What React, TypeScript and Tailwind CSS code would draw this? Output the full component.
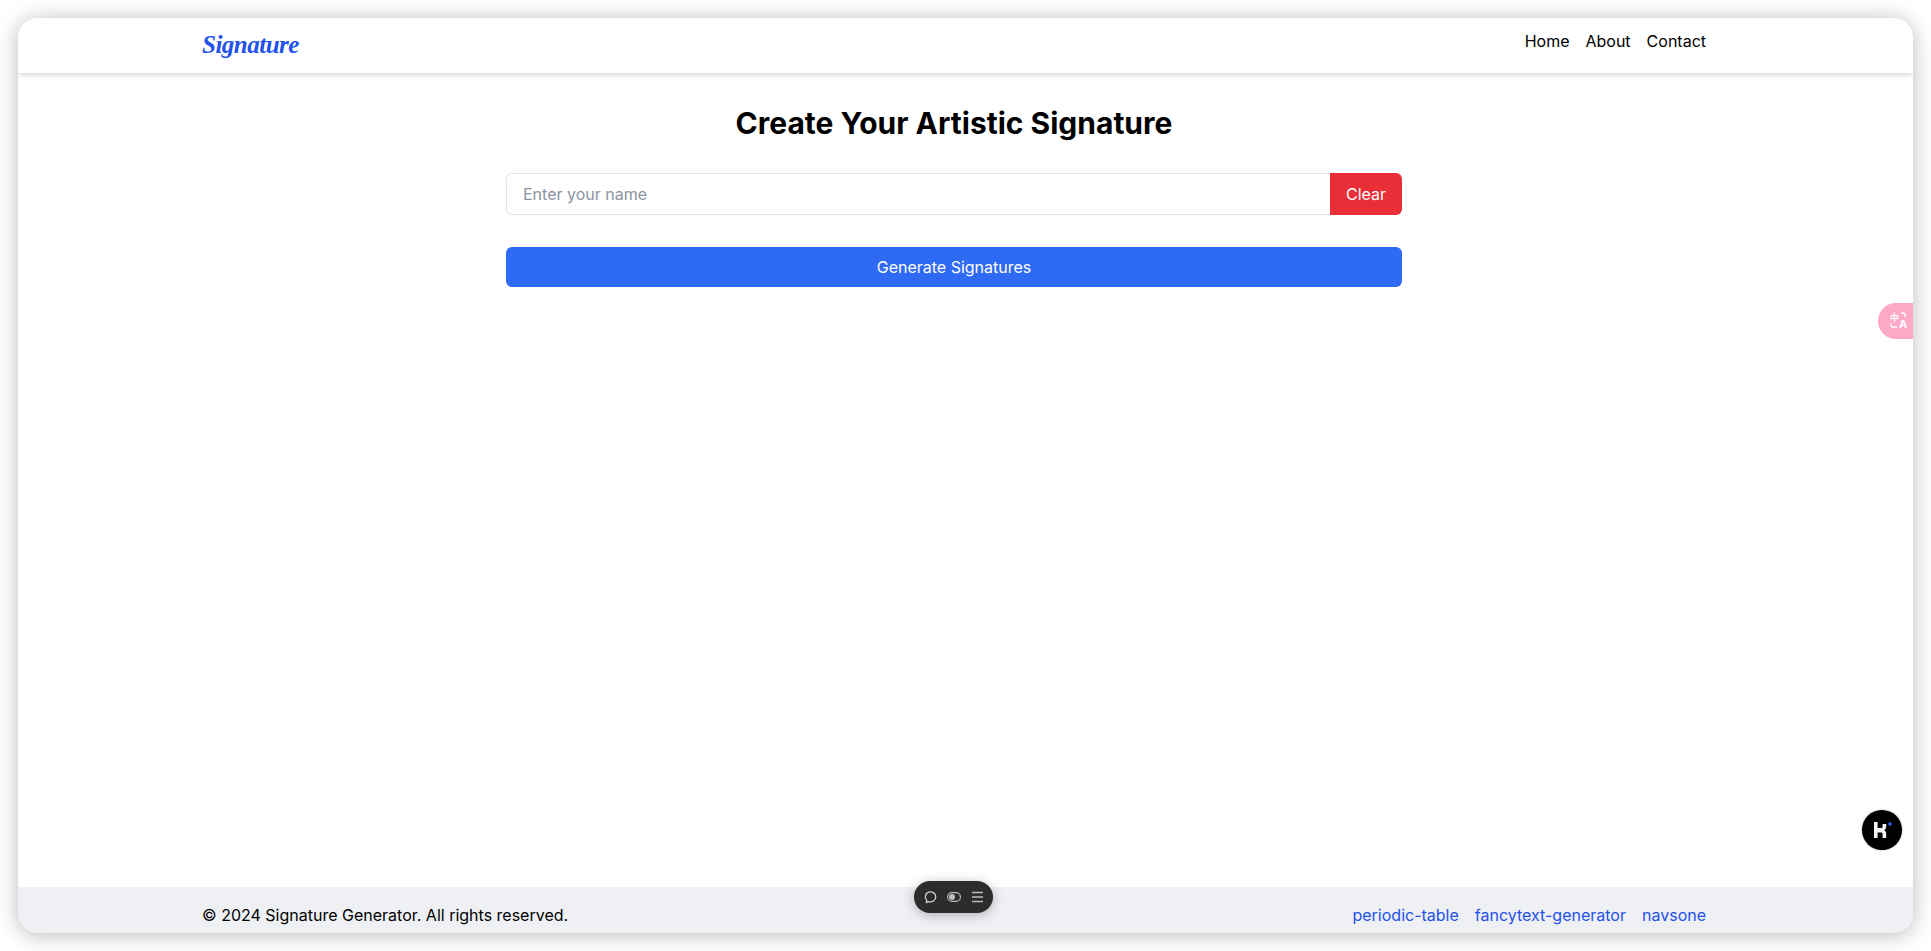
import React from "react";

const inter = { fontFamily: "Inter, 'Liberation Sans', sans-serif" };

function Pill() {
  return (
    <div className="absolute left-[914px] top-[881px] flex h-[32px] w-[79px] items-center justify-between rounded-full bg-[#2c2c2c] px-[9px] shadow-[0_2px_12px_rgba(0,0,0,0.28)]">
      <svg width="14" height="14" viewBox="0 0 14 14" fill="none" stroke="#cfcfcf" strokeWidth="1.3">
        <path d="M3.2 12.6l.5-2.4A5.2 5 0 1 1 6 11.6z" strokeLinejoin="round" />
      </svg>
      <svg width="14" height="12" viewBox="0 0 14 12" fill="none">
        <rect x="0.6" y="1.6" width="12.8" height="8.8" rx="4.4" stroke="#bdbdbd" strokeWidth="1.1" />
        <circle cx="5" cy="6" r="3" fill="#bdbdbd" />
      </svg>
      <svg width="13" height="12" viewBox="0 0 13 12" stroke="#bdbdbd" strokeWidth="1.5">
        <path d="M1 1.5h11M1 6h11M1 10.5h11" />
      </svg>
    </div>
  );
}

function TranslateTab() {
  return (
    <div className="absolute left-[1878px] top-[303px] flex h-[36px] w-[35px] items-center rounded-l-[18px] bg-[#fda8c6] pl-[10px]">
      <svg width="24" height="24" viewBox="0 0 24 24" fill="none">
        <text x="2" y="12" fontSize="9" fontWeight="700" fill="#fff" fontFamily="'Noto Sans CJK SC', sans-serif">中</text>
        <text x="11" y="19" fontSize="11" fontWeight="700" fill="#fff" fontFamily="Inter, sans-serif">A</text>
        <path d="M13 4h2a2 2 0 0 1 2 2v2M3 14v2a2 2 0 0 0 2 2h4" stroke="#fff" strokeWidth="1.3" />
      </svg>
    </div>
  );
}

function KBadge() {
  return (
    <div className="absolute left-[1862px] top-[810px] flex h-[40px] w-[40px] items-center justify-center rounded-full bg-black shadow-[0_0_2px_rgba(0,0,0,0.4)]">
      <svg width="24" height="24" viewBox="0 0 24 24">
        <path d="M4 4h3.600v6h3.400c1 0 1.600-.6 1.600-1.600V6h3.600v2.800c0 1.600-.8 2.700-2 3.400 1.200.6 2 1.800 2 3.400V20H12.600v-3.800c0-1-.6-1.600-1.600-1.600H7.600V20H4z" fill="#f2f2f2" />
        <circle cx="20" cy="6" r="1.800" fill="#2f5cf0" />
      </svg>
    </div>
  );
}

export default function App() {
  return (
    <div className="relative h-[951px] w-[1931px] overflow-hidden bg-white pl-[18px] pt-[18px]" style={inter}>
      <div className="flex h-[915px] w-[1895px] flex-col overflow-hidden rounded-[20px] bg-white shadow-[0_2px_22px_rgba(0,0,0,0.28)]">
        <header className="relative z-10 h-[55px] shrink-0 bg-white pr-[22px] shadow-[0_2px_5px_rgba(0,0,0,0.16)]">
          <div className="mx-auto flex h-full w-[1873px] items-start justify-between pl-[184px] pr-[185px]">
            <span
              className="mt-[8px] text-[25px] font-bold italic leading-[38px] tracking-[-0.5px] text-[#2251ec]"
              style={{ fontFamily: "'Liberation Serif', cursive" }}
            >
              Signature
            </span>
            <nav className="mt-[11px] flex gap-4 text-base leading-6 text-black">
              <a>Home</a>
              <a>About</a>
              <a>Contact</a>
            </nav>
          </div>
        </header>
        <main className="flex-1 pr-[23px]">
          <div className="mx-auto flex w-[896px] flex-col pt-[32px]">
            <h1 className="text-center text-[30px] font-bold leading-9 text-black">Create Your Artistic Signature</h1>
            <div className="mt-[32px] flex h-[42px]">
              <div className="flex flex-1 items-center rounded-l-[6px] border border-r-0 border-[#e3e4ea] pl-4 text-base text-[#8b92a1]">
                Enter your name
              </div>
              <button className="w-[72px] rounded-r-[6px] bg-[#ea2e38] text-base text-white">Clear</button>
            </div>
            <button className="mt-[32px] h-[40px] rounded-[6px] bg-[#2f6af5] text-base text-white">Generate Signatures</button>
          </div>
        </main>
        <footer className="h-[46px] shrink-0 bg-[#eff0f4] pr-[22px]">
          <div className="mx-auto flex h-full w-[1873px] items-start justify-between pl-[184px] pr-[185px] pt-[16px] text-base leading-6">
            <span className="text-black">© 2024 Signature Generator. All rights reserved.</span>
            <nav className="flex gap-4 text-[#2251ec]">
              <a>periodic-table</a>
              <a>fancytext-generator</a>
              <a>navsone</a>
            </nav>
          </div>
        </footer>
      </div>
      <Pill />
      <TranslateTab />
      <KBadge />
    </div>
  );
}
